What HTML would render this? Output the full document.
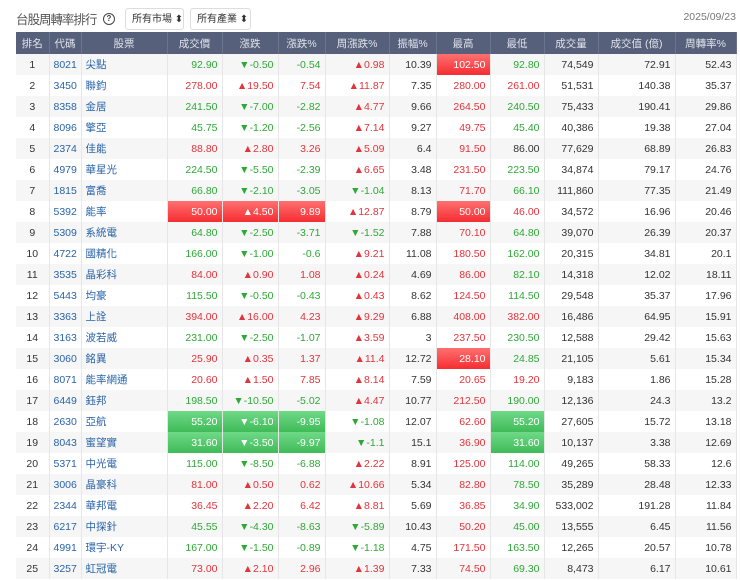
<!DOCTYPE html><html><head><meta charset="utf-8"><style>
body{margin:0;width:740px;height:580px;overflow:hidden;background:#fff;font-family:"Liberation Sans","Noto Sans CJK TC",sans-serif;font-size:11px;color:#333}
.top{position:absolute;left:16px;top:7px;height:23px;display:flex;align-items:center}
.title{font-size:12.5px;color:#555;margin-right:8px;letter-spacing:-1px;width:79px;white-space:nowrap}
.q{width:10px;height:10px;border:1.3px solid #444;border-radius:50%;font-size:8px;line-height:10px;text-align:center;font-weight:bold;margin-right:10px;color:#444}
.sel{border:1px solid #ddd;border-radius:3px;height:22px;line-height:22px;padding:0 6px;font-size:10px;color:#333;margin-right:6px;box-sizing:border-box;width:59px;white-space:nowrap}
.sel2{width:61px}
.date{position:absolute;right:4px;top:11px;font-size:10.5px;color:#777}
table{position:absolute;left:16px;top:32px;border-collapse:collapse;table-layout:fixed;width:720px}
th{background:#56607b;color:#dfe3ec;font-weight:normal;height:22px;border-right:1px solid #6a7390;text-align:center;padding:0;font-size:10.5px}
td{height:21px;padding:0 4px;text-align:right;border-right:1px solid #e6e6e6;white-space:nowrap;font-size:10.5px}
tr:nth-child(even) td{background:#f6f6f6}
td:nth-child(1){text-align:center}
td:nth-child(2),td:nth-child(3){text-align:left;color:#2a64a8}
.r{color:#e3333b}.g{color:#2ea836}
tr td.hr{background:linear-gradient(#ff7070,#f52d32);color:#fff}
tr td.hg{background:linear-gradient(#6fd987,#3fbb58);color:#fff}
</style></head><body>
<div class="top"><span class="title">台股周轉率排行</span><span class="q">?</span><span class="sel">所有市場 ⬍</span><span class="sel sel2">所有產業 ⬍</span></div>
<div class="date">2025/09/23</div>
<table>
<colgroup><col style="width:33px"><col style="width:32px"><col style="width:86px"><col style="width:55px"><col style="width:56px"><col style="width:47px"><col style="width:64px"><col style="width:47px"><col style="width:54px"><col style="width:54px"><col style="width:54px"><col style="width:77px"><col style="width:61px"></colgroup>
<tr><th>排名</th><th>代碼</th><th>股票</th><th>成交價</th><th>漲跌</th><th>漲跌%</th><th>周漲跌%</th><th>振幅%</th><th>最高</th><th>最低</th><th>成交量</th><th>成交值 (億)</th><th>周轉率%</th></tr>
<tr><td>1</td><td>8021</td><td>尖點</td><td class="g">92.90</td><td class="g">▼-0.50</td><td class="g">-0.54</td><td class="r">▲0.98</td><td>10.39</td><td class="hr">102.50</td><td class="g">92.80</td><td>74,549</td><td>72.91</td><td>52.43</td></tr>
<tr><td>2</td><td>3450</td><td>聯鈞</td><td class="r">278.00</td><td class="r">▲19.50</td><td class="r">7.54</td><td class="r">▲11.87</td><td>7.35</td><td class="r">280.00</td><td class="r">261.00</td><td>51,531</td><td>140.38</td><td>35.37</td></tr>
<tr><td>3</td><td>8358</td><td>金居</td><td class="g">241.50</td><td class="g">▼-7.00</td><td class="g">-2.82</td><td class="r">▲4.77</td><td>9.66</td><td class="r">264.50</td><td class="g">240.50</td><td>75,433</td><td>190.41</td><td>29.86</td></tr>
<tr><td>4</td><td>8096</td><td>擎亞</td><td class="g">45.75</td><td class="g">▼-1.20</td><td class="g">-2.56</td><td class="r">▲7.14</td><td>9.27</td><td class="r">49.75</td><td class="g">45.40</td><td>40,386</td><td>19.38</td><td>27.04</td></tr>
<tr><td>5</td><td>2374</td><td>佳能</td><td class="r">88.80</td><td class="r">▲2.80</td><td class="r">3.26</td><td class="r">▲5.09</td><td>6.4</td><td class="r">91.50</td><td>86.00</td><td>77,629</td><td>68.89</td><td>26.83</td></tr>
<tr><td>6</td><td>4979</td><td>華星光</td><td class="g">224.50</td><td class="g">▼-5.50</td><td class="g">-2.39</td><td class="r">▲6.65</td><td>3.48</td><td class="r">231.50</td><td class="g">223.50</td><td>34,874</td><td>79.17</td><td>24.76</td></tr>
<tr><td>7</td><td>1815</td><td>富喬</td><td class="g">66.80</td><td class="g">▼-2.10</td><td class="g">-3.05</td><td class="g">▼-1.04</td><td>8.13</td><td class="r">71.70</td><td class="g">66.10</td><td>111,860</td><td>77.35</td><td>21.49</td></tr>
<tr><td>8</td><td>5392</td><td>能率</td><td class="hr">50.00</td><td class="hr">▲4.50</td><td class="hr">9.89</td><td class="r">▲12.87</td><td>8.79</td><td class="hr">50.00</td><td class="r">46.00</td><td>34,572</td><td>16.96</td><td>20.46</td></tr>
<tr><td>9</td><td>5309</td><td>系統電</td><td class="g">64.80</td><td class="g">▼-2.50</td><td class="g">-3.71</td><td class="g">▼-1.52</td><td>7.88</td><td class="r">70.10</td><td class="g">64.80</td><td>39,070</td><td>26.39</td><td>20.37</td></tr>
<tr><td>10</td><td>4722</td><td>國精化</td><td class="g">166.00</td><td class="g">▼-1.00</td><td class="g">-0.6</td><td class="r">▲9.21</td><td>11.08</td><td class="r">180.50</td><td class="g">162.00</td><td>20,315</td><td>34.81</td><td>20.1</td></tr>
<tr><td>11</td><td>3535</td><td>晶彩科</td><td class="r">84.00</td><td class="r">▲0.90</td><td class="r">1.08</td><td class="r">▲0.24</td><td>4.69</td><td class="r">86.00</td><td class="g">82.10</td><td>14,318</td><td>12.02</td><td>18.11</td></tr>
<tr><td>12</td><td>5443</td><td>均豪</td><td class="g">115.50</td><td class="g">▼-0.50</td><td class="g">-0.43</td><td class="r">▲0.43</td><td>8.62</td><td class="r">124.50</td><td class="g">114.50</td><td>29,548</td><td>35.37</td><td>17.96</td></tr>
<tr><td>13</td><td>3363</td><td>上詮</td><td class="r">394.00</td><td class="r">▲16.00</td><td class="r">4.23</td><td class="r">▲9.29</td><td>6.88</td><td class="r">408.00</td><td class="r">382.00</td><td>16,486</td><td>64.95</td><td>15.91</td></tr>
<tr><td>14</td><td>3163</td><td>波若威</td><td class="g">231.00</td><td class="g">▼-2.50</td><td class="g">-1.07</td><td class="r">▲3.59</td><td>3</td><td class="r">237.50</td><td class="g">230.50</td><td>12,588</td><td>29.42</td><td>15.63</td></tr>
<tr><td>15</td><td>3060</td><td>銘異</td><td class="r">25.90</td><td class="r">▲0.35</td><td class="r">1.37</td><td class="r">▲11.4</td><td>12.72</td><td class="hr">28.10</td><td class="g">24.85</td><td>21,105</td><td>5.61</td><td>15.34</td></tr>
<tr><td>16</td><td>8071</td><td>能率網通</td><td class="r">20.60</td><td class="r">▲1.50</td><td class="r">7.85</td><td class="r">▲8.14</td><td>7.59</td><td class="r">20.65</td><td class="r">19.20</td><td>9,183</td><td>1.86</td><td>15.28</td></tr>
<tr><td>17</td><td>6449</td><td>鈺邦</td><td class="g">198.50</td><td class="g">▼-10.50</td><td class="g">-5.02</td><td class="r">▲4.47</td><td>10.77</td><td class="r">212.50</td><td class="g">190.00</td><td>12,136</td><td>24.3</td><td>13.2</td></tr>
<tr><td>18</td><td>2630</td><td>亞航</td><td class="hg">55.20</td><td class="hg">▼-6.10</td><td class="hg">-9.95</td><td class="g">▼-1.08</td><td>12.07</td><td class="r">62.60</td><td class="hg">55.20</td><td>27,605</td><td>15.72</td><td>13.18</td></tr>
<tr><td>19</td><td>8043</td><td>蜜望實</td><td class="hg">31.60</td><td class="hg">▼-3.50</td><td class="hg">-9.97</td><td class="g">▼-1.1</td><td>15.1</td><td class="r">36.90</td><td class="hg">31.60</td><td>10,137</td><td>3.38</td><td>12.69</td></tr>
<tr><td>20</td><td>5371</td><td>中光電</td><td class="g">115.00</td><td class="g">▼-8.50</td><td class="g">-6.88</td><td class="r">▲2.22</td><td>8.91</td><td class="r">125.00</td><td class="g">114.00</td><td>49,265</td><td>58.33</td><td>12.6</td></tr>
<tr><td>21</td><td>3006</td><td>晶豪科</td><td class="r">81.00</td><td class="r">▲0.50</td><td class="r">0.62</td><td class="r">▲10.66</td><td>5.34</td><td class="r">82.80</td><td class="g">78.50</td><td>35,289</td><td>28.48</td><td>12.33</td></tr>
<tr><td>22</td><td>2344</td><td>華邦電</td><td class="r">36.45</td><td class="r">▲2.20</td><td class="r">6.42</td><td class="r">▲8.81</td><td>5.69</td><td class="r">36.85</td><td class="g">34.90</td><td>533,002</td><td>191.28</td><td>11.84</td></tr>
<tr><td>23</td><td>6217</td><td>中探針</td><td class="g">45.55</td><td class="g">▼-4.30</td><td class="g">-8.63</td><td class="g">▼-5.89</td><td>10.43</td><td class="r">50.20</td><td class="g">45.00</td><td>13,555</td><td>6.45</td><td>11.56</td></tr>
<tr><td>24</td><td>4991</td><td>環宇-KY</td><td class="g">167.00</td><td class="g">▼-1.50</td><td class="g">-0.89</td><td class="g">▼-1.18</td><td>4.75</td><td class="r">171.50</td><td class="g">163.50</td><td>12,265</td><td>20.57</td><td>10.78</td></tr>
<tr><td>25</td><td>3257</td><td>虹冠電</td><td class="r">73.00</td><td class="r">▲2.10</td><td class="r">2.96</td><td class="r">▲1.39</td><td>7.33</td><td class="r">74.50</td><td class="g">69.30</td><td>8,473</td><td>6.17</td><td>10.61</td></tr>
</table>
</body></html>
